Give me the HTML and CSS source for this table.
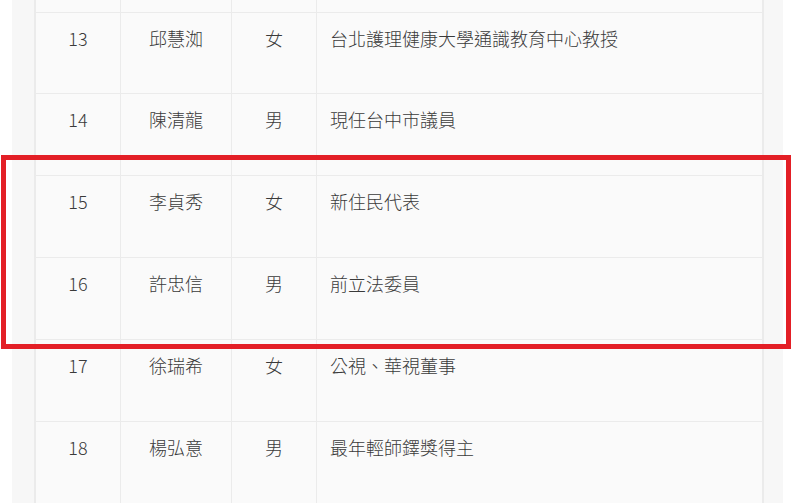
FILE: index.html
```html
<!DOCTYPE html>
<html lang="zh-Hant">
<head>
<meta charset="utf-8">
<link rel="stylesheet" href="styles.css">
</head>
<body>
<div class="page">
  <div class="panel">
    <div class="table">
      <div class="row row-partial">
        <div class="cell"></div><div class="cell"></div><div class="cell"></div><div class="cell"></div>
      </div>
      <div class="row row-first">
        <div class="cell c">13</div><div class="cell c">邱慧洳</div><div class="cell c">女</div><div class="cell l">台北護理健康大學通識教育中心教授</div>
      </div>
      <div class="row">
        <div class="cell c">14</div><div class="cell c">陳清龍</div><div class="cell c">男</div><div class="cell l">現任台中市議員</div>
      </div>
      <div class="row">
        <div class="cell c">15</div><div class="cell c">李貞秀</div><div class="cell c">女</div><div class="cell l">新住民代表</div>
      </div>
      <div class="row">
        <div class="cell c">16</div><div class="cell c">許忠信</div><div class="cell c">男</div><div class="cell l">前立法委員</div>
      </div>
      <div class="row">
        <div class="cell c">17</div><div class="cell c">徐瑞希</div><div class="cell c">女</div><div class="cell l">公視、華視董事</div>
      </div>
      <div class="row">
        <div class="cell c">18</div><div class="cell c">楊弘意</div><div class="cell c">男</div><div class="cell l">最年輕師鐸獎得主</div>
      </div>
    </div>
  </div>
  <div class="highlight"></div>
</div>
</body>
</html>
```
FILE: styles.css
```css
html, body {
  margin: 0;
  padding: 0;
  background: #ffffff;
  overflow: hidden;
}

body {
  width: 792px;
  height: 503px;
  font-family: "Noto Sans CJK TC", "Noto Sans", sans-serif;
  font-size: 18px;
  font-weight: 300;
  color: #3a3a3a;
}

.page {
  position: relative;
  height: 503px;
  overflow: hidden;
}

.panel {
  margin-left: 12px;
  width: 771px;
  box-sizing: border-box;
  padding: 0 19px 0 22px;
  background: #f7f7f7;
  height: 503px;
}

.table {
  width: 730px;
  box-sizing: border-box;
  border-left: 2px solid #ebebeb;
  border-right: 2px solid #ebebeb;
  background: #fafafa;
  height: 100%;
}

.row {
  display: grid;
  grid-template-columns: 84px 111px 85px 446px;
  height: 82px;
  box-sizing: border-box;
  border-top: 1px solid #ebebeb;
}

.row-partial {
  height: 12px;
  border-top: 0;
}

.row-first {
  height: 81px;
}

.cell {
  box-sizing: border-box;
  padding-top: 12px;
  line-height: 26px;
  white-space: nowrap;
}

.cell + .cell {
  border-left: 1px solid #ebebeb;
}

.c {
  text-align: center;
}

.l {
  text-align: left;
  padding-left: 13px;
}

.highlight {
  position: absolute;
  left: 1px;
  top: 155px;
  width: 790px;
  height: 194px;
  box-sizing: border-box;
  border: 5px solid #e31f26;
}
```
